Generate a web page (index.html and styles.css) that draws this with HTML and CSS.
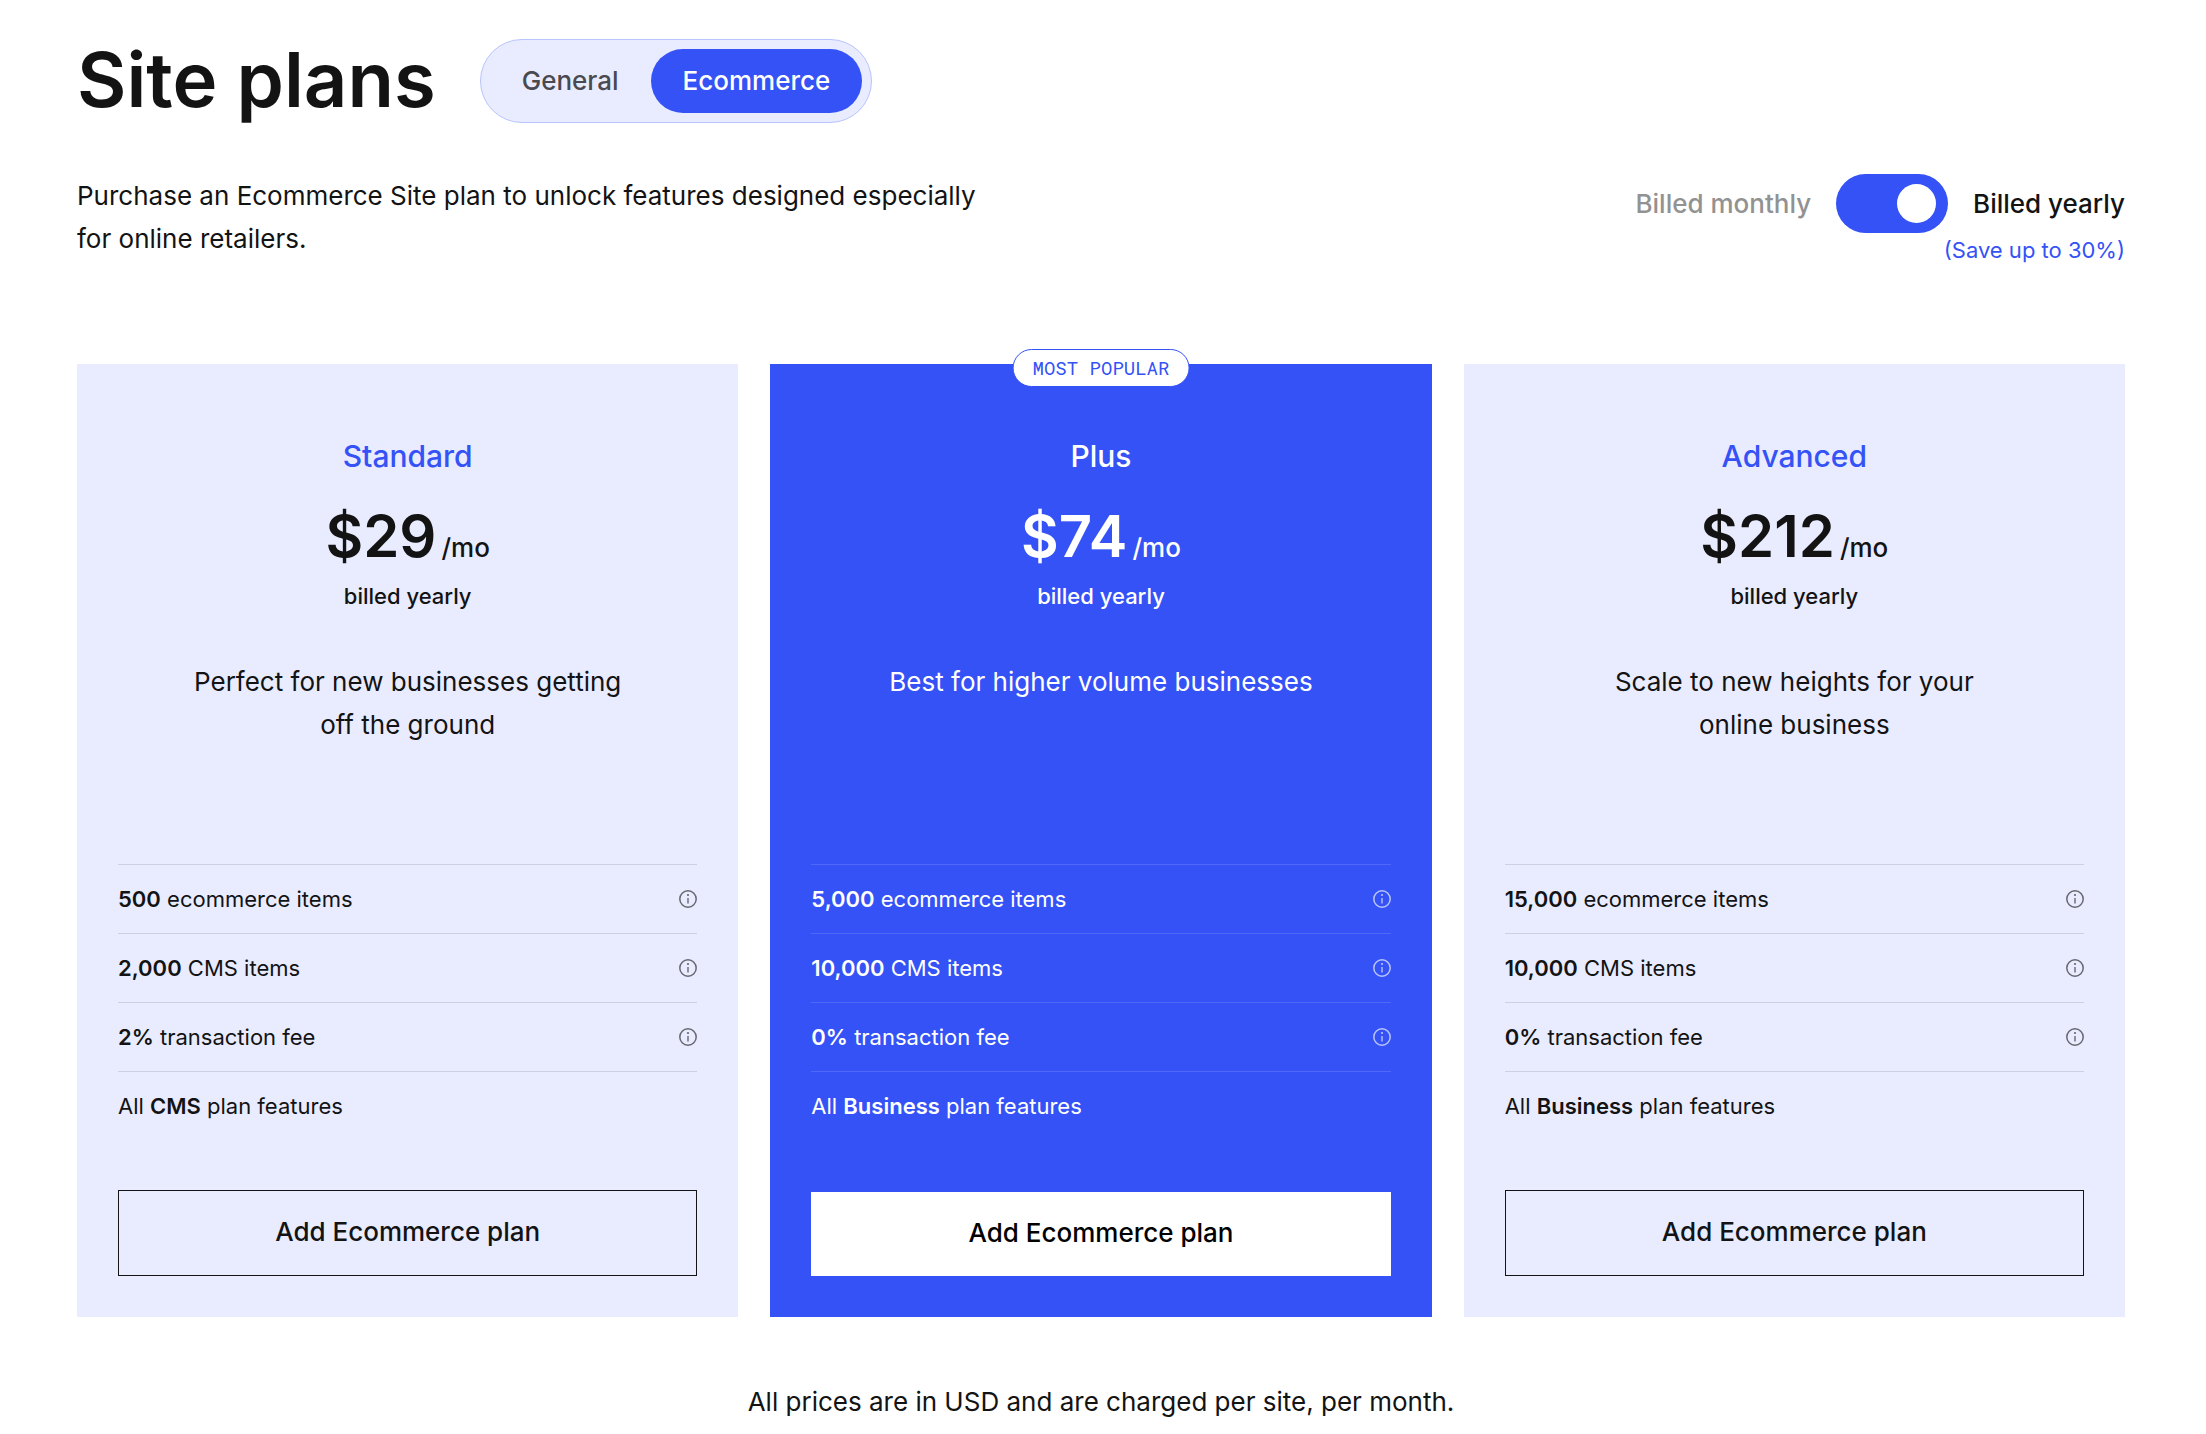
FILE: index.html
```html
<!DOCTYPE html>
<html lang="en">
<head>
  <meta charset="UTF-8">
  <meta name="viewport" content="width=device-width, initial-scale=1">
  <title>Site plans</title>
  <link rel="stylesheet" href="styles.css">
</head>
<body>
  <svg class="sprite" aria-hidden="true">
    <symbol id="info" viewBox="0 0 18 18">
      <circle cx="9" cy="9" r="8.2" fill="none" stroke="currentColor" stroke-width="1.5"/>
      <path d="M9 8v5.5" stroke="currentColor" stroke-width="1.4"/>
      <circle cx="9" cy="5" r="1.1" fill="currentColor"/>
    </symbol>
  </svg>

  <main class="page">
    <header class="top">
      <h1>Site plans</h1>
      <div class="tabs">
        <button type="button" class="tab">General</button>
        <button type="button" class="tab active">Ecommerce</button>
      </div>
    </header>

    <div class="intro">
      <p class="lead">Purchase an Ecommerce Site plan to unlock features designed especially for online retailers.</p>
      <div class="billing">
        <div class="billing-row">
          <span class="monthly">Billed monthly</span>
          <input type="checkbox" class="switch" id="yearly" checked>
          <label for="yearly">Billed yearly</label>
        </div>
        <span class="save">(Save up to 30%)</span>
      </div>
    </div>

    <section class="plans">
      <article class="plan">
        <h2>Standard</h2>
        <p class="price"><span class="amount">$29</span><span class="per">/mo</span></p>
        <p class="billed">billed yearly</p>
        <p class="desc">Perfect for new businesses getting off the ground</p>
        <ul class="features">
          <li><span><b>500</b> ecommerce items</span><svg class="info"><use href="#info"/></svg></li>
          <li><span><b>2,000</b> CMS items</span><svg class="info"><use href="#info"/></svg></li>
          <li><span><b>2%</b> transaction fee</span><svg class="info"><use href="#info"/></svg></li>
          <li><span>All <b>CMS</b> plan features</span></li>
        </ul>
        <button type="button" class="add">Add Ecommerce plan</button>
      </article>

      <article class="plan popular">
        <span class="badge">MOST POPULAR</span>
        <h2>Plus</h2>
        <p class="price"><span class="amount">$74</span><span class="per">/mo</span></p>
        <p class="billed">billed yearly</p>
        <p class="desc">Best for higher volume businesses</p>
        <ul class="features">
          <li><span><b>5,000</b> ecommerce items</span><svg class="info"><use href="#info"/></svg></li>
          <li><span><b>10,000</b> CMS items</span><svg class="info"><use href="#info"/></svg></li>
          <li><span><b>0%</b> transaction fee</span><svg class="info"><use href="#info"/></svg></li>
          <li><span>All <b>Business</b> plan features</span></li>
        </ul>
        <button type="button" class="add">Add Ecommerce plan</button>
      </article>

      <article class="plan">
        <h2>Advanced</h2>
        <p class="price"><span class="amount">$212</span><span class="per">/mo</span></p>
        <p class="billed">billed yearly</p>
        <p class="desc">Scale to new heights for your online business</p>
        <ul class="features">
          <li><span><b>15,000</b> ecommerce items</span><svg class="info"><use href="#info"/></svg></li>
          <li><span><b>10,000</b> CMS items</span><svg class="info"><use href="#info"/></svg></li>
          <li><span><b>0%</b> transaction fee</span><svg class="info"><use href="#info"/></svg></li>
          <li><span>All <b>Business</b> plan features</span></li>
        </ul>
        <button type="button" class="add">Add Ecommerce plan</button>
      </article>
    </section>

    <p class="note">All prices are in USD and are charged per site, per month.</p>
  </main>
</body>
</html>
```
FILE: styles.css
```css
* {
  box-sizing: border-box;
}
body {
  margin: 0;
  background: #fff;
  color: #131313;
  font-family: Inter, "Liberation Sans", sans-serif;
  font-size: 26px;
  line-height: 43px;
}
h1, h2, p, ul {
  margin: 0;
  padding: 0;
}
button {
  font: inherit;
  font-weight: 500;
  cursor: pointer;
}
.sprite {
  display: none;
}
.page {
  padding: 39px 81px 0 77px;
}
.top {
  display: flex;
  align-items: flex-start;
  gap: 44px;
}
h1 {
  font-size: 76px;
  line-height: 80px;
  font-weight: 600;
}
.tabs {
  display: flex;
  padding: 9px;
  background: #e9ecff;
  border: 1px solid #b9c3fc;
  border-radius: 42px;
}
.tab {
  height: 64px;
  padding: 0 32px 2px;
  border: none;
  border-radius: 32px;
  background: none;
  color: #494a50;
}
.tab.active {
  background: #3452f6;
  color: #fff;
}

/* intro text and billing switch */
.intro {
  display: flex;
  justify-content: space-between;
  margin-top: 51px;
}
.lead {
  max-width: 920px;
}
.billing {
  display: flex;
  flex-direction: column;
  align-items: flex-end;
}
.billing-row {
  display: flex;
  align-items: center;
  gap: 25px;
  font-weight: 500;
}
.monthly {
  color: #929292;
}
.switch {
  appearance: none;
  width: 112px;
  height: 59px;
  margin: 0;
  padding: 10px 12px;
  border-radius: 30px;
  background: #3452f6;
  display: flex;
  justify-content: flex-end;
  cursor: pointer;
}
.switch::before {
  content: "";
  width: 39px;
  height: 39px;
  border-radius: 50%;
  background: #fff;
}
.switch:not(:checked) {
  justify-content: flex-start;
  background: #929292;
}
.save {
  color: #3452f6;
  font-size: 22px;
  line-height: 34px;
}

/* plan cards */
.plans {
  display: grid;
  grid-template-columns: repeat(3, 1fr);
  gap: 32px;
  margin-top: 97px;
}
.plan {
  position: relative;
  display: flex;
  flex-direction: column;
  padding: 72px 41px 41px;
  background: #e9ecff;
  text-align: center;
}
.popular {
  background: #3452f6;
  color: #fff;
}
.badge {
  position: absolute;
  top: -15px;
  left: 50%;
  transform: translateX(-50%);
  padding: 0 19px;
  border: 1px solid #3452f6;
  border-radius: 19px;
  background: #fff;
  color: #3452f6;
  font-family: "Roboto Mono", "Liberation Mono", monospace;
  font-size: 19px;
  line-height: 36px;
  white-space: nowrap;
}
h2 {
  color: #3452f6;
  font-size: 30px;
  line-height: 40px;
  font-weight: 500;
}
.popular h2 {
  color: #fff;
}
.price {
  display: flex;
  justify-content: center;
  align-items: baseline;
  gap: 5px;
  margin-top: 30px;
  line-height: 60px;
  font-weight: 500;
}
.amount {
  font-size: 58px;
  font-weight: 600;
}
.billed {
  margin-top: 2px;
  font-size: 22px;
  line-height: 32px;
  font-weight: 500;
}
.desc {
  height: 86px;
  max-width: 436px;
  margin: 48px auto 0;
}
.features {
  margin-top: 118px;
  list-style: none;
  font-size: 22px;
  line-height: 32px;
  text-align: left;
}
.features li {
  display: flex;
  justify-content: space-between;
  align-items: center;
  height: 69px;
  border-top: 1px solid #cdd0e3;
}
.popular .features li {
  border-color: #4f69f7;
}
.features b {
  font-weight: 600;
}
.info {
  width: 18px;
  height: 18px;
  color: #66676f;
}
.popular .info {
  color: #bac5fc;
}
.add {
  height: 86px;
  margin-top: 50px;
  padding-bottom: 4px;
  border: 1px solid #131313;
  background: none;
  color: #131313;
}
.popular .add {
  height: 84px;
  margin-top: 52px;
  border: none;
  background: #fff;
  color: #000;
}
.note {
  margin: 63px 0 10px;
  text-align: center;
}
```
